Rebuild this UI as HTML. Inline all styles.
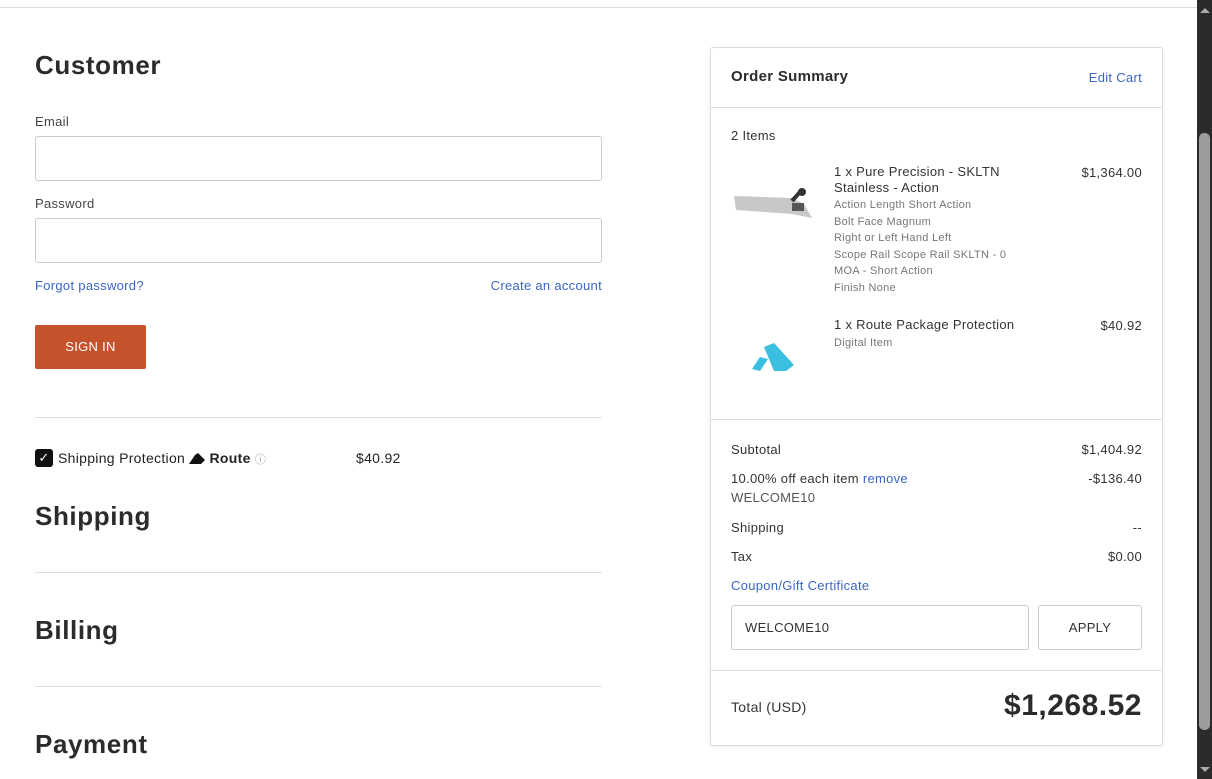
<!DOCTYPE html>
<html><head><style>
*{box-sizing:border-box;margin:0;padding:0}
body{width:1212px;height:779px;overflow:hidden;background:#fff;font-family:"Liberation Sans",sans-serif;color:#333;position:relative;letter-spacing:0.3px}
.a{position:absolute}
.h{font-size:26px;font-weight:bold;color:#2b2b2b;letter-spacing:0.6px}
.lbl{font-size:13px;color:#444}
.inp{border:1px solid #ccc;border-radius:3px;height:45px;width:567px;left:35px}
.link{color:#3a66c4;font-size:13px}
.hr{height:1px;background:#ddd;left:35px;width:567px}
.s{font-size:13px;color:#333}
.r{right:70px;text-align:right}
.g{font-size:11px;color:#777;line-height:16.5px}
</style></head><body>
<div class="a" style="left:0;top:7px;width:1197px;height:1px;background:#ddd"></div>
<div class="a" style="left:1197px;top:0;width:15px;height:779px;background:#2b2b2b"></div>
<div class="a" style="left:1199px;top:133px;width:11px;height:597px;background:#9c9c9c;border-radius:5px"></div>
<div class="a" style="left:1200px;top:8px;width:0;height:0;border-left:5px solid transparent;border-right:5px solid transparent;border-bottom:5px solid #aaa"></div>
<div class="a" style="left:1200px;top:767px;width:0;height:0;border-left:5px solid transparent;border-right:5px solid transparent;border-top:5px solid #aaa"></div>

<div class="a h" style="left:35px;top:50px">Customer</div>
<div class="a lbl" style="left:35px;top:114px">Email</div>
<div class="a inp" style="top:136px"></div>
<div class="a lbl" style="left:35px;top:196px">Password</div>
<div class="a inp" style="top:218px"></div>
<div class="a link" style="left:35px;top:278px">Forgot password?</div>
<div class="a link" style="right:610px;top:278px">Create an account</div>
<div class="a" style="left:35px;top:325px;width:111px;height:44px;background:#c4522a;border-radius:2px;color:#fff;font-size:13px;text-align:center;line-height:44px">SIGN IN</div>
<div class="a hr" style="top:417px"></div>
<div class="a" style="left:35px;top:449px;width:18px;height:18px;background:#111;border-radius:3px;color:#fff;font-size:13px;text-align:center;line-height:18px">✓</div>
<div class="a" style="left:58px;top:450px;font-size:14px;color:#222">Shipping Protection <svg width="16" height="11" style="vertical-align:-1px"><path d="M0 11 L6 2 L9 0 L16 7 L12 11 Z" fill="#111"/></svg> <b>Route</b> <span style="color:#999;font-size:11px">ⓘ</span></div>
<div class="a" style="left:356px;top:450px;font-size:14px;color:#222">$40.92</div>
<div class="a h" style="left:35px;top:501px">Shipping</div>
<div class="a hr" style="top:572px"></div>
<div class="a h" style="left:35px;top:615px">Billing</div>
<div class="a hr" style="top:686px"></div>
<div class="a h" style="left:35px;top:729px">Payment</div>

<div class="a" style="left:710px;top:47px;width:453px;height:699px;border:1px solid #ddd;border-radius:3px;box-shadow:0 1px 4px rgba(0,0,0,.08)"></div>
<div class="a" style="left:731px;top:68px;font-size:15px;font-weight:bold;color:#2b2b2b">Order Summary</div>
<div class="a link r" style="top:70px">Edit Cart</div>
<div class="a" style="left:711px;top:107px;width:451px;height:1px;background:#ddd"></div>
<div class="a s" style="left:731px;top:128px">2 Items</div>
<svg class="a" style="left:732px;top:186px" width="82" height="36"><path d="M2 10 L60 12 L72 18 L80 32 L60 28 L4 24 Z" fill="#c8c8c8"/><path d="M60 15 L68 6" stroke="#333" stroke-width="4"/><circle cx="70" cy="6" r="4" fill="#333"/><rect x="60" y="17" width="12" height="8" fill="#555"/></svg>
<div class="a" style="left:834px;top:164px;font-size:13px;color:#333;line-height:16px">1 x Pure Precision - SKLTN<br>Stainless - Action</div>
<div class="a g" style="left:834px;top:197px">Action Length Short Action<br>Bolt Face Magnum<br>Right or Left Hand Left<br>Scope Rail Scope Rail SKLTN - 0<br>MOA - Short Action<br>Finish None</div>
<div class="a s r" style="top:165px">$1,364.00</div>
<svg class="a" style="left:750px;top:343px" width="46" height="30"><path d="M14 4 L24 0 L44 22 L36 28 L24 28 Z" fill="#3bbfe0"/><path d="M2 26 L10 14 L18 16 L10 28 Z" fill="#3bbfe0"/></svg>
<div class="a s" style="left:834px;top:317px">1 x Route Package Protection</div>
<div class="a g" style="left:834px;top:335px">Digital Item</div>
<div class="a s r" style="top:318px">$40.92</div>
<div class="a" style="left:711px;top:419px;width:451px;height:1px;background:#ddd"></div>
<div class="a s" style="left:731px;top:442px">Subtotal</div><div class="a s r" style="top:442px">$1,404.92</div>
<div class="a s" style="left:731px;top:471px">10.00% off each item <span class="link">remove</span></div><div class="a s r" style="top:471px">-$136.40</div>
<div class="a s" style="left:731px;top:490px;color:#555">WELCOME10</div>
<div class="a s" style="left:731px;top:520px">Shipping</div><div class="a s r" style="top:520px">--</div>
<div class="a s" style="left:731px;top:549px">Tax</div><div class="a s r" style="top:549px">$0.00</div>
<div class="a link" style="left:731px;top:578px">Coupon/Gift Certificate</div>
<div class="a" style="left:731px;top:605px;width:298px;height:45px;border:1px solid #ccc;border-radius:3px;font-size:13px;line-height:43px;padding-left:13px;color:#333">WELCOME10</div>
<div class="a" style="left:1038px;top:605px;width:104px;height:45px;border:1px solid #ccc;border-radius:3px;font-size:13px;line-height:43px;text-align:center;color:#333">APPLY</div>
<div class="a" style="left:711px;top:670px;width:451px;height:1px;background:#ddd"></div>
<div class="a" style="left:731px;top:699px;font-size:14px;color:#333">Total (USD)</div>
<div class="a r" style="top:689px;font-size:30px;font-weight:bold;color:#2b2b2b;letter-spacing:0.5px">$1,268.52</div>
</body></html>
